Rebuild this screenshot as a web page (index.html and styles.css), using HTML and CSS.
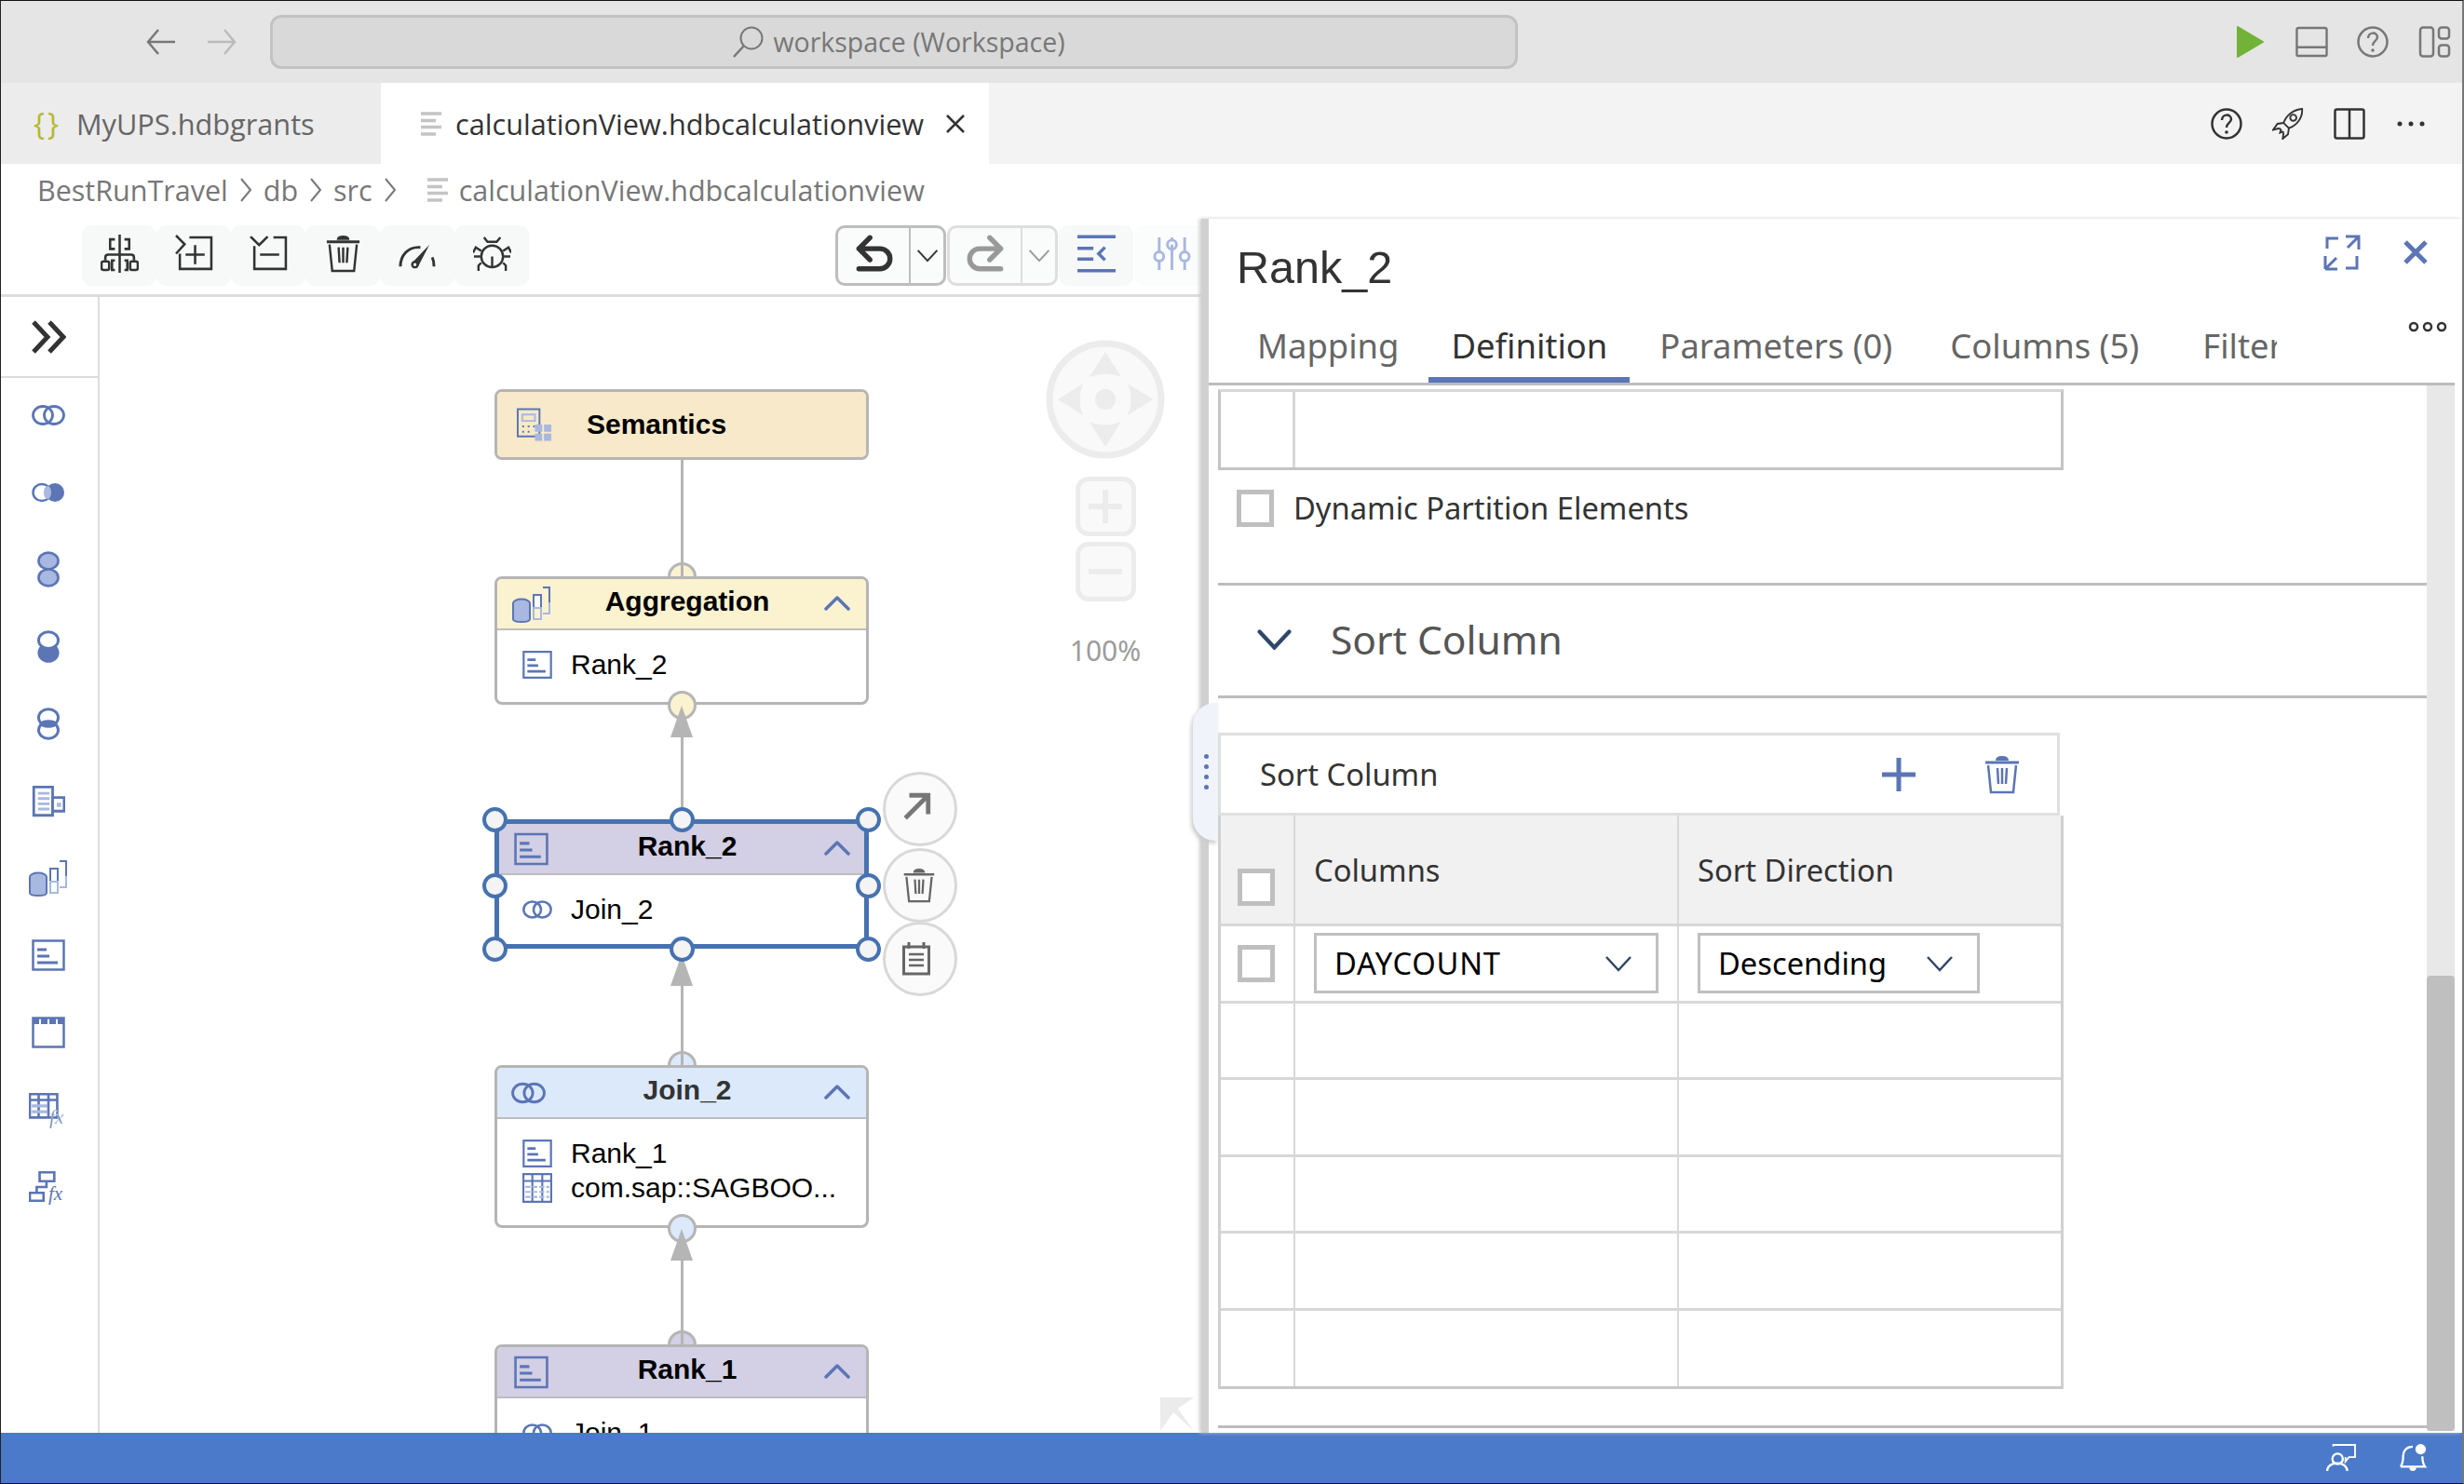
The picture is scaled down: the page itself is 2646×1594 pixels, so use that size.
FILE: index.html
```html
<!DOCTYPE html>
<html>
  <head>
    <meta charset="utf-8">
    <title>calculationView.hdbcalculationview</title>
    <link rel="stylesheet" href="styles.css">
  </head>
  <body>
    <svg class="sprite" xmlns="http://www.w3.org/2000/svg">
      <defs>
        <symbol id="i-lines" viewBox="0 0 22 28"><path d="M0 3h22M0 10.500h16M0 17.500h22M0 25h16" fill="none" stroke="currentColor" stroke-width="3.500"/></symbol>
        <symbol id="i-chev-right" viewBox="0 0 14 28"><path d="M2 2l10 12L2 26" fill="none" stroke="currentColor" stroke-width="2"/></symbol>
        <symbol id="i-chev-down" viewBox="0 0 30 18"><path d="M2 2l13 14L28 2" fill="none" stroke="currentColor" stroke-width="2.500"/></symbol>
        <symbol id="i-chev-bold" viewBox="0 0 30 18"><path d="M2 2l13 14L28 2" fill="none" stroke="currentColor" stroke-width="3.500" stroke-linecap="round"/></symbol>
        <symbol id="i-chev-up" viewBox="0 0 28 18"><path d="M2 15L14 3l12 12" fill="none" stroke="currentColor" stroke-width="3.500" stroke-linecap="round" stroke-linejoin="round"/></symbol>
        <symbol id="i-help" viewBox="0 0 34 34"><circle cx="17" cy="17" r="15.500" fill="none" stroke="currentColor" stroke-width="2.500"/><path d="M12 13c0-7 10-7 10-1 0 4-5 4-5 9" fill="none" stroke="currentColor" stroke-width="2.500"/><circle cx="17" cy="26" r="1.800" fill="currentColor"/></symbol>
        <symbol id="i-tree" viewBox="0 0 40 40"><path d="M20 0v40M15 5h-5v10h5M25 5h5v10h-5M5 27v-3q0-3 3-3h24q3 0 3 3v3M15 27h-3v10h3M25 27h3v10h-3" fill="none" stroke="currentColor" stroke-width="2.500"/><rect x="1" y="28" width="8" height="9" rx="2" fill="none" stroke="currentColor" stroke-width="2.500"/><rect x="31" y="28" width="8" height="9" rx="2" fill="none" stroke="currentColor" stroke-width="2.500"/></symbol>
        <symbol id="i-expand-add" viewBox="0 0 40 40"><path d="M1 1l9 9-9 10M15 3h23v33H5V20M11 21h20M21 11v20" fill="none" stroke="currentColor" stroke-width="2.500"/></symbol>
        <symbol id="i-collapse-sub" viewBox="0 0 40 40"><path d="M1 2l9 9 9-9M25 3h13v33H5V12M11 21h20" fill="none" stroke="currentColor" stroke-width="2.500"/></symbol>
        <symbol id="i-trash" viewBox="0 0 36 42"><path d="M0 8h36" stroke="currentColor" stroke-width="3"/><path d="M11 6q0-5 7-5t7 5z" fill="currentColor"/><path d="M3 11l3 29h24l3-29M13 14l1 17M18 14v17M23 14l-1 17" fill="none" stroke="currentColor" stroke-width="2.500"/></symbol>
        <symbol id="i-gauge" viewBox="0 0 42 36"><path d="M2 32C2 20 10 10 24 11M39 32q0-6-2-10" fill="none" stroke="currentColor" stroke-width="3"/><path d="M34 8L21 33l-6-5z" fill="currentColor"/><circle cx="18" cy="30" r="3" fill="#f7f9f9" stroke="currentColor" stroke-width="2.500"/></symbol>
        <symbol id="i-bug" viewBox="0 0 42 42"><circle cx="21" cy="24" r="12" fill="none" stroke="currentColor" stroke-width="2.500"/><path d="M21 24v12M12 3l4 5h10l4-5M9 18L3 14 0 20M33 18l6-4 3 6M9 31l-3 3v6M33 31l3 3v6M8 24H1M34 24h7" fill="none" stroke="currentColor" stroke-width="2.500"/></symbol>
        <symbol id="i-undo" viewBox="0 0 38 38"><path d="M15 3L4 14l11 11M4 14h21a10 10 0 0 1 0 20H4" fill="none" stroke="currentColor" stroke-width="5" stroke-linecap="round" stroke-linejoin="round"/></symbol>
        <symbol id="i-redo" viewBox="0 0 38 38"><path d="M23 3l11 11-11 11M34 14H13a10 10 0 0 0 0 20h21" fill="none" stroke="currentColor" stroke-width="5" stroke-linecap="round" stroke-linejoin="round"/></symbol>
        <symbol id="i-align" viewBox="0 0 36 36"><path d="M0 2h36M0 34h36M0 13h15M0 23h15M0 2" fill="none" stroke="currentColor" stroke-width="3"/><path d="M26 12l-6 6 6 6" fill="none" stroke="currentColor" stroke-width="3"/></symbol>
        <symbol id="i-sliders" viewBox="0 0 42 36"><path d="M7 0v16M7 26v10M21 8v28M21 0v2M35 0v16M35 26v10" fill="none" stroke="currentColor" stroke-width="3"/><circle cx="7" cy="21" r="5" fill="none" stroke="currentColor" stroke-width="3"/><circle cx="21" cy="8" r="5" fill="none" stroke="currentColor" stroke-width="3"/><circle cx="35" cy="21" r="5" fill="none" stroke="currentColor" stroke-width="3"/></symbol>
        <symbol id="i-join" viewBox="0 0 36 24"><ellipse cx="12" cy="12" rx="10.500" ry="9.500" fill="none" stroke="currentColor" stroke-width="2.800"/><ellipse cx="24" cy="12" rx="10.500" ry="9.500" fill="none" stroke="currentColor" stroke-width="2.800"/></symbol>
        <symbol id="i-outer" viewBox="0 0 36 24"><ellipse cx="11" cy="12" rx="9.500" ry="9" fill="none" stroke="currentColor" stroke-width="2.500"/><ellipse cx="25" cy="12" rx="10" ry="10" fill="currentColor"/><ellipse cx="17" cy="12" rx="4" ry="7" fill="#a8b8e0"/></symbol>
        <symbol id="i-union" viewBox="0 0 24 38"><ellipse cx="12" cy="10" rx="10" ry="8.500" fill="#a8b8e0" stroke="currentColor" stroke-width="2.500"/><ellipse cx="12" cy="27" rx="10" ry="8.500" fill="#a8b8e0" stroke="currentColor" stroke-width="2.500"/></symbol>
        <symbol id="i-stack-low" viewBox="0 0 24 38"><ellipse cx="12" cy="25" rx="11" ry="10" fill="currentColor"/><ellipse cx="12" cy="12" rx="10" ry="8.500" fill="#fff" stroke="currentColor" stroke-width="2.800"/></symbol>
        <symbol id="i-stack-mid" viewBox="0 0 24 38"><ellipse cx="12" cy="12" rx="10" ry="8.500" fill="none" stroke="currentColor" stroke-width="2.800"/><ellipse cx="12" cy="25" rx="10" ry="8.500" fill="none" stroke="currentColor" stroke-width="2.800"/><ellipse cx="12" cy="18.500" rx="9" ry="4" fill="currentColor"/></symbol>
        <symbol id="i-view" viewBox="0 0 32 32"><path d="M2 3h18v27H2z" fill="none" stroke="currentColor" stroke-width="2.500"/><path d="M6 9h11M6 14h11M6 19h11M6 24h11" stroke="#a8b8e0" stroke-width="2.500"/><path d="M20 13h11v13H20z" fill="#fff" stroke="currentColor" stroke-width="2.500"/><path d="M24 18h4v4h-4z" fill="#a8b8e0"/></symbol>
        <symbol id="i-aggr" viewBox="0 0 42 40"><ellipse cx="10" cy="19" rx="9" ry="4.500" fill="#a8b8e0" stroke="currentColor" stroke-width="2"/><path d="M1 19v17q0 3 9 3t9-3V19" fill="#a8b8e0" stroke="currentColor" stroke-width="2"/><path d="M23 10h8v14h-8z" fill="#fff" stroke="currentColor" stroke-width="2"/><path d="M23 24h8v12h-8z" fill="none" stroke="#a8b8e0" stroke-width="2"/><path d="M33 2h7v16" fill="none" stroke="currentColor" stroke-width="2"/><path d="M40 18v12h-7" fill="none" stroke="#a8b8e0" stroke-width="2"/></symbol>
        <symbol id="i-rank" viewBox="0 0 36 34"><path d="M1.500 1.500h33v31h-33z" fill="#fff" fill-opacity=".01" stroke="currentColor" stroke-width="2.500"/><path d="M6 11h10M6 18h13M6 25h22" stroke="currentColor" stroke-width="3"/></symbol>
        <symbol id="i-window" viewBox="0 0 36 34"><path d="M1.500 1.500h33v31h-33z" fill="none" stroke="currentColor" stroke-width="2.500"/><path d="M1 5h34" stroke="currentColor" stroke-width="6" stroke-dasharray="7 2"/></symbol>
        <symbol id="i-table" viewBox="0 0 30 30"><path d="M1 1h28v28H1zM1 8h28M10 1v28M20 1v28" fill="none" stroke="currentColor" stroke-width="2"/><path d="M3 14h24M3 19h24M3 24h24" stroke="#a8b8e0" stroke-width="2" stroke-dasharray="5 2"/></symbol>
        <symbol id="i-table-fx" viewBox="0 0 40 36"><path d="M1 2h28v24H1zM1 8h28M10 2v24M20 2v24" fill="none" stroke="currentColor" stroke-width="2.500"/><path d="M3 14h16M3 20h16" stroke="#a8b8e0" stroke-width="3"/><text x="21" y="32" font-family="Liberation Serif, serif" font-style="italic" font-size="20" fill="currentColor" stroke="#fff" stroke-width=".3">fx</text></symbol>
        <symbol id="i-graph-fx" viewBox="0 0 40 36"><path d="M11 3h15v9H11zM1 24h14v8H1zM18 12v6H8v6" fill="none" stroke="currentColor" stroke-width="2.500"/><text x="20" y="31" font-family="Liberation Serif, serif" font-style="italic" font-size="20" fill="currentColor">fx</text></symbol>
        <symbol id="i-semantics" viewBox="0 0 38 36"><path d="M1 1h24v30H1z" fill="none" stroke="currentColor" stroke-width="2"/><path d="M6 7h14v7H6z" fill="none" stroke="#a8b8e0" stroke-width="2"/><path d="M6 19h2v2H6zM12 19h2v2h-2zM18 19h2v2h-2zM6 25h2v2H6zM12 25h2v2h-2z" fill="currentColor"/><path d="M20 18h8v8h-8zM30 18h8v8h-8zM20 28h8v8h-8zM30 28h8v8h-8z" fill="#a8b8e0"/></symbol>
      </defs>
    </svg>

    <div class="window">
      <header class="titlebar">
        <div class="nav-arrows">
          <svg class="nav-arrow" viewBox="0 0 32 30"><path d="M13 2L2 15l11 13M2 15h29" fill="none" stroke="#777" stroke-width="2.500"/></svg>
          <svg class="nav-arrow nav-arrow-off" viewBox="0 0 32 30"><path d="M19 2l11 13-11 13M30 15H1" fill="none" stroke="#bbb" stroke-width="2.500"/></svg>
        </div>
        <div class="command-box">
          <svg class="command-icon" viewBox="0 0 34 34"><circle cx="21" cy="13" r="11.500" fill="none" stroke="#777" stroke-width="2"/><path d="M13 21L2 33" stroke="#777" stroke-width="2.500"/></svg>
          <span>workspace (Workspace)</span>
        </div>
        <div class="title-actions">
          <div class="title-action"><svg class="play-icon" viewBox="0 0 30 36"><path d="M2 2l27 16L2 34z" fill="#72b236" stroke="#72b236" stroke-width="2" stroke-linejoin="round"/></svg></div>
          <div class="title-action"><svg class="panel-icon" viewBox="0 0 36 34"><rect x="1.500" y="1.500" width="33" height="31" rx="2" fill="none" stroke="#777" stroke-width="2.500"/><path d="M1 23h34" stroke="#777" stroke-width="2.500"/></svg></div>
          <div class="title-action title-help"><svg class="help-icon"><use href="#i-help"/></svg></div>
          <div class="title-action"><svg class="panel-icon" viewBox="0 0 34 34"><rect x="1.500" y="1.500" width="14" height="31" rx="3" fill="none" stroke="#777" stroke-width="2.500"/><rect x="21.500" y="1.500" width="11" height="12" rx="3" fill="none" stroke="#777" stroke-width="2.500"/><rect x="21.500" y="20.500" width="11" height="12" rx="3" fill="none" stroke="#777" stroke-width="2.500"/></svg></div>
        </div>
      </header>

      <nav class="tabbar">
        <div class="tab tab-inactive">
          <span class="tab-braces">{}</span>
          <span>MyUPS.hdbgrants</span>
        </div>
        <div class="tab tab-active">
          <svg class="lines-icon"><use href="#i-lines"/></svg>
          <span>calculationView.hdbcalculationview</span>
          <svg class="tab-close" viewBox="0 0 22 22"><path d="M2 2l18 18M20 2L2 20" stroke="#333" stroke-width="2.500"/></svg>
        </div>
        <div class="tab-actions">
          <svg class="tab-action help-dark"><use href="#i-help"/></svg>
          <svg class="tab-action" viewBox="0 0 36 36"><path d="M34 1C24 2 16 8 13 17l6 6C28 20 35 11 34 1z" fill="none" stroke="#333" stroke-width="2"/><circle cx="24" cy="11" r="3.500" fill="none" stroke="#333" stroke-width="2"/><path d="M13 17l-7 1-5 7 7-2M19 23l-1 7-6 5 1-7M8 23l2 2-1 3 3-1 1 1" fill="none" stroke="#333" stroke-width="2"/></svg>
          <svg class="tab-action" viewBox="0 0 34 34"><rect x="1.500" y="1.500" width="31" height="31" rx="2" fill="none" stroke="#333" stroke-width="2.500"/><path d="M17 1v32" stroke="#333" stroke-width="2.500"/></svg>
          <svg class="tab-action" viewBox="0 0 34 34"><circle cx="5" cy="17" r="2.500" fill="#333"/><circle cx="17" cy="17" r="2.500" fill="#333"/><circle cx="29" cy="17" r="2.500" fill="#333"/></svg>
        </div>
      </nav>

      <div class="crumbs">
        <span>BestRunTravel</span>
        <svg class="crumb-sep"><use href="#i-chev-right"/></svg>
        <span>db</span>
        <svg class="crumb-sep"><use href="#i-chev-right"/></svg>
        <span>src</span>
        <svg class="crumb-sep"><use href="#i-chev-right"/></svg>
        <svg class="lines-icon crumb-file"><use href="#i-lines"/></svg>
        <span>calculationView.hdbcalculationview</span>
      </div>

      <main class="workbench">
        <section class="editor">
          <div class="toolbar">
            <div class="tool"><svg class="tool-icon"><use href="#i-tree"/></svg></div>
            <div class="tool"><svg class="tool-icon"><use href="#i-expand-add"/></svg></div>
            <div class="tool"><svg class="tool-icon"><use href="#i-collapse-sub"/></svg></div>
            <div class="tool"><svg class="tool-icon"><use href="#i-trash"/></svg></div>
            <div class="tool"><svg class="tool-icon"><use href="#i-gauge"/></svg></div>
            <div class="tool"><svg class="tool-icon"><use href="#i-bug"/></svg></div>
            <div class="toolbar-right">
              <div class="split-tool">
                <div class="split-main"><svg class="tool-icon"><use href="#i-undo"/></svg></div>
                <div class="split-menu"><svg class="split-chev"><use href="#i-chev-down"/></svg></div>
              </div>
              <div class="split-tool split-tool-off">
                <div class="split-main"><svg class="tool-icon"><use href="#i-redo"/></svg></div>
                <div class="split-menu"><svg class="split-chev"><use href="#i-chev-down"/></svg></div>
              </div>
              <div class="tool tool-blue"><svg class="tool-icon"><use href="#i-align"/></svg></div>
              <div class="tool tool-faded"><svg class="tool-icon"><use href="#i-sliders"/></svg></div>
            </div>
          </div>

          <div class="editor-body">
            <aside class="palette">
              <div class="palette-top">
                <svg class="palette-toggle" viewBox="0 0 38 38"><path d="M3 3l15 16L3 35M20 3l15 16-15 16" fill="none" stroke="#333" stroke-width="5"/></svg>
              </div>
              <div class="palette-list">
                <svg class="pal-icon"><use href="#i-join"/></svg>
                <svg class="pal-icon"><use href="#i-outer"/></svg>
                <svg class="pal-icon"><use href="#i-union"/></svg>
                <svg class="pal-icon"><use href="#i-stack-low"/></svg>
                <svg class="pal-icon"><use href="#i-stack-mid"/></svg>
                <svg class="pal-icon"><use href="#i-view"/></svg>
                <svg class="pal-icon pal-icon-wide"><use href="#i-aggr"/></svg>
                <svg class="pal-icon"><use href="#i-rank"/></svg>
                <svg class="pal-icon"><use href="#i-window"/></svg>
                <svg class="pal-icon pal-icon-wide"><use href="#i-table-fx"/></svg>
                <svg class="pal-icon pal-icon-wide"><use href="#i-graph-fx"/></svg>
              </div>
            </aside>

            <div class="canvas">
              <div class="edge edge-1"></div>
              <div class="edge edge-2"></div>
              <div class="edge edge-3"></div>
              <div class="edge edge-4"></div>

              <div class="port port-yellow port-a"></div>
              <div class="port port-blue port-c"></div>
              <div class="port port-purple port-e"></div>

              <div class="node node-semantics">
                <div class="node-head">
                  <div class="node-icon"><svg class="head-icon head-icon-sem"><use href="#i-semantics"/></svg></div>
                  <div class="node-title node-title-left">Semantics</div>
                </div>
              </div>

              <div class="node node-aggregation">
                <div class="node-head">
                  <div class="node-icon"><svg class="head-icon head-icon-aggr"><use href="#i-aggr"/></svg></div>
                  <div class="node-title">Aggregation</div>
                  <div class="node-toggle"><svg class="toggle-icon"><use href="#i-chev-up"/></svg></div>
                </div>
                <div class="node-body">
                  <div class="node-row"><svg class="row-icon"><use href="#i-rank"/></svg><span>Rank_2</span></div>
                </div>
              </div>

              <div class="node node-rank2">
                <div class="node-head">
                  <div class="node-icon"><svg class="head-icon"><use href="#i-rank"/></svg></div>
                  <div class="node-title">Rank_2</div>
                  <div class="node-toggle"><svg class="toggle-icon"><use href="#i-chev-up"/></svg></div>
                </div>
                <div class="node-body">
                  <div class="node-row"><svg class="row-icon"><use href="#i-join"/></svg><span>Join_2</span></div>
                </div>
              </div>

              <div class="node node-join2">
                <div class="node-head">
                  <div class="node-icon"><svg class="head-icon head-icon-join"><use href="#i-join"/></svg></div>
                  <div class="node-title node-title-soft">Join_2</div>
                  <div class="node-toggle"><svg class="toggle-icon"><use href="#i-chev-up"/></svg></div>
                </div>
                <div class="node-body">
                  <div class="node-row"><svg class="row-icon"><use href="#i-rank"/></svg><span>Rank_1</span></div>
                  <div class="node-row"><svg class="row-icon"><use href="#i-table"/></svg><span>com.sap::SAGBOO...</span></div>
                </div>
              </div>

              <div class="node node-rank1">
                <div class="node-head">
                  <div class="node-icon"><svg class="head-icon"><use href="#i-rank"/></svg></div>
                  <div class="node-title">Rank_1</div>
                  <div class="node-toggle"><svg class="toggle-icon"><use href="#i-chev-up"/></svg></div>
                </div>
                <div class="node-body">
                  <div class="node-row"><svg class="row-icon"><use href="#i-join"/></svg><span>Join_1</span></div>
                </div>
              </div>

              <div class="port port-yellow port-b"></div>
              <div class="port port-blue port-d"></div>
              <div class="arrow arrow-1"></div>
              <div class="arrow arrow-2"></div>
              <div class="arrow arrow-3"></div>

              <div class="grip grip-tl"></div>
              <div class="grip grip-tc"></div>
              <div class="grip grip-tr"></div>
              <div class="grip grip-ml"></div>
              <div class="grip grip-mr"></div>
              <div class="grip grip-bl"></div>
              <div class="grip grip-bc"></div>
              <div class="grip grip-br"></div>

              <div class="node-action node-action-a">
                <svg class="action-icon" viewBox="0 0 30 30"><path d="M3 27L26 4M7 4h19v19" fill="none" stroke="#777" stroke-width="4.500"/></svg>
              </div>
              <div class="node-action node-action-b">
                <svg class="action-icon"><use href="#i-trash"/></svg>
              </div>
              <div class="node-action node-action-c">
                <svg class="action-icon" viewBox="0 0 30 36"><path d="M1.500 5h27v29h-27z" fill="none" stroke="#666" stroke-width="3"/><path d="M7 0v7M23 0v7" stroke="#666" stroke-width="3"/><path d="M7 13h16M7 19h16M7 25h16" stroke="#666" stroke-width="2.500"/></svg>
              </div>

              <div class="navigator">
                <svg class="nav-wheel" viewBox="0 0 128 128">
                  <circle cx="64" cy="64" r="60" fill="#f9f9f9" stroke="#ececec" stroke-width="7"/>
                  <path d="M64 13l17 27q-17-7-34 0zM64 115l17-27q-17 7-34 0zM13 64l27-17q-7 17 0 34zM115 64L88 47q7 17 0 34z" fill="#ececec"/>
                  <circle cx="64" cy="64" r="11" fill="#ececec"/>
                </svg>
                <div class="zoom-btn"><svg class="zoom-glyph" viewBox="0 0 36 36"><path d="M0 18h36M18 0v36" stroke="#ececec" stroke-width="6"/></svg></div>
                <div class="zoom-btn"><svg class="zoom-glyph" viewBox="0 0 36 36"><path d="M0 18h36" stroke="#ececec" stroke-width="6"/></svg></div>
                <div class="zoom-label">100%</div>
              </div>

              <svg class="fit-arrow" viewBox="0 0 36 36"><path d="M0 0h36L19 12l17 24-22-20L0 36z" fill="#ebebeb"/></svg>
            </div>
          </div>
        </section>

        <section class="panel">
          <div class="panel-handle"><i></i><i></i><i></i><i></i></div>
          <div class="panel-top">
            <h1 class="panel-title">Rank_2</h1>
            <div class="panel-tools">
              <svg class="panel-tool" viewBox="0 0 40 40"><path d="M4 16V5h12M24 3h14v14M38 3L26 15M36 24v13H24M2 38V24M2 38h13M2 38l12-12" fill="none" stroke="#5b75b5" stroke-width="3"/></svg>
              <svg class="panel-tool panel-close" viewBox="0 0 26 26"><path d="M2 2l22 22M24 2L2 24" stroke="#5b75b5" stroke-width="5"/></svg>
            </div>
            <svg class="panel-more" viewBox="0 0 42 12"><circle cx="6" cy="6" r="4" fill="none" stroke="#333" stroke-width="2.500"/><circle cx="21" cy="6" r="4" fill="none" stroke="#333" stroke-width="2.500"/><circle cx="36" cy="6" r="4" fill="none" stroke="#333" stroke-width="2.500"/></svg>
            <div class="panel-tabs">
              <div class="panel-tab">Mapping</div>
              <div class="panel-tab panel-tab-on">Definition</div>
              <div class="panel-tab">Parameters (0)</div>
              <div class="panel-tab panel-tab-columns">Columns (5)</div>
              <div class="panel-tab panel-tab-filter">Filter</div>
            </div>
          </div>

          <div class="panel-body">
            <div class="panel-scroll">
              <div class="stub-table"><div class="stub-cell"></div><div></div></div>

              <label class="check-row">
                <span class="checkbox"></span>
                Dynamic Partition Elements
              </label>

              <div class="section-head">
                <svg class="section-chev"><use href="#i-chev-bold"/></svg>
                <span>Sort Column</span>
              </div>

              <div class="sort-bar">
                <span>Sort Column</span>
                <svg class="sort-add" viewBox="0 0 36 36"><path d="M0 18h36M18 0v36" stroke="#5b75b5" stroke-width="5"/></svg>
                <svg class="sort-del"><use href="#i-trash"/></svg>
              </div>

              <table class="sort-table">
                <thead>
                  <tr>
                    <th class="col-check"><span class="checkbox checkbox-low"></span></th>
                    <th>Columns</th>
                    <th>Sort Direction</th>
                  </tr>
                </thead>
                <tbody>
                  <tr>
                    <td class="col-check"><span class="checkbox"></span></td>
                    <td><div class="select select-a">DAYCOUNT<svg class="select-chev"><use href="#i-chev-down"/></svg></div></td>
                    <td><div class="select select-b">Descending<svg class="select-chev"><use href="#i-chev-down"/></svg></div></td>
                  </tr>
                  <tr><td></td><td></td><td></td></tr>
                  <tr><td></td><td></td><td></td></tr>
                  <tr><td></td><td></td><td></td></tr>
                  <tr><td></td><td></td><td></td></tr>
                  <tr class="row-last"><td></td><td></td><td></td></tr>
                </tbody>
              </table>
            </div>
            <div class="scrollbar"><div class="scrollbar-thumb"></div></div>
          </div>
        </section>
      </main>

      <footer class="statusbar">
        <svg class="status-icon" viewBox="0 0 34 32"><path d="M8 3V1h25v14h-7l-4 5v-5" fill="none" stroke="#fff" stroke-width="2"/><circle cx="13" cy="17" r="6" fill="none" stroke="#fff" stroke-width="2.500"/><path d="M1 31c0-12 23-12 23 0" fill="none" stroke="#fff" stroke-width="2.500"/></svg>
        <svg class="status-icon" viewBox="0 0 34 32"><path d="M3 26c3-4 3-8 3-13S10 3 17 3M28 14c0 5 0 8 3 12H3" fill="none" stroke="#fff" stroke-width="2.500"/><path d="M13 27a4 4 0 0 0 8 0z" fill="#fff"/><circle cx="26" cy="6" r="6" fill="#fff"/></svg>
      </footer>
    </div>
  </body>
</html>
```

FILE: styles.css
```css
:root {
  --blue-icon: #5b75b5;
  --select-blue: #4672b0;
  --edge-gray: #b5b5b5;
  --line-gray: #bdbdbd;
  --cell-gray: #d8d8d8;
  --ui-font: "Open Sans", "Noto Sans", sans-serif;
  --panel-font: "Noto Sans", "Open Sans", sans-serif;
}
*,*:before,*:after { box-sizing: border-box; }
html, body {
  margin: 0;
  height: 100%;
  overflow: hidden;
}
.sprite { display: none; }

.window {
  width: 2646px;
  height: 1594px;
  display: flex;
  flex-direction: column;
  border-top: 1px solid #111;
  border-left: 1px solid #222;
  border-bottom: 1px solid #111;
  border-right: 2px solid #777;
  background-color: #fff;
  font-family: var(--ui-font);
  overflow: hidden;
}

/* title bar */
.titlebar {
  height: 88px;
  flex: none;
  display: flex;
  align-items: center;
  background-color: #e5e5e5;
}
.nav-arrows {
  width: 289px;
  flex: none;
  display: flex;
  padding-left: 156px;
  gap: 33px;
}
.nav-arrow { width: 32px; height: 30px; }
.command-box {
  width: 1340px;
  height: 58px;
  flex: none;
  display: flex;
  align-items: center;
  justify-content: center;
  gap: 10px;
  padding-left: 10px;
  background-color: #d9d9d9;
  border: 3px solid #c2c2c2;
  border-radius: 12px;
  color: #777;
  font-size: 28.500px;
}
.command-icon { width: 34px; height: 34px; }
.title-actions {
  margin-left: auto;
  margin-right: -3px;
  display: flex;
}
.title-action {
  width: 66px;
  height: 40px;
  display: flex;
  align-items: center;
  justify-content: center;
  color: #777;
}
.play-icon { width: 30px; height: 36px; }
.panel-icon { width: 35px; height: 34px; }
.help-icon { width: 34px; height: 34px; }

/* tabs */
.tabbar {
  height: 87px;
  flex: none;
  display: flex;
  background-color: #f3f3f3;
}
.tab {
  display: flex;
  align-items: center;
  font-size: 30.700px;
}
.tab-inactive {
  width: 408px;
  padding-left: 35px;
  gap: 16px;
  background-color: #ececec;
  color: #666;
}
.tab-braces {
  color: #b5b82f;
  font-size: 32px;
  letter-spacing: 3px;
}
.tab-active {
  width: 653px;
  padding-left: 43px;
  gap: 15px;
  background-color: #fff;
  color: #333;
}
.lines-icon {
  width: 22px;
  height: 28px;
  flex: none;
  color: #c4c4c4;
}
.tab-close { width: 22px; height: 22px; margin-left: 8px; flex: none; }
.tab-actions {
  margin-left: auto;
  display: flex;
  gap: 32px;
  align-items: center;
  padding-right: 38px;
}
.tab-action { width: 34px; height: 34px; }
.help-dark { color: #333; }

/* breadcrumbs */
.crumbs {
  height: 59px;
  flex: none;
  display: flex;
  align-items: center;
  padding: 0 0 3px 39px;
  gap: 12px;
  color: #777;
  font-size: 30.500px;
}
.crumb-sep {
  width: 14px;
  height: 28px;
  flex: none;
  color: #777;
}
.crumb-file { margin-left: 21px; }

/* editor */
.workbench {
  flex: 1;
  min-height: 0;
  display: flex;
}
.editor {
  width: 1289px;
  flex: none;
  display: flex;
  flex-direction: column;
}
.toolbar {
  height: 84px;
  flex: none;
  display: flex;
  margin-right: -8px;
  padding: 7px 0 9px 87px;
  border-bottom: 3px solid #dcdce0;
}
.tool {
  width: 80px;
  height: 65px;
  display: flex;
  align-items: center;
  justify-content: center;
  background-color: #f7f9f9;
  border-radius: 10px;
  color: #333;
}
.tool-icon { width: 41px; height: 41px; margin-top: -4px; }
.tool-blue { color: var(--blue-icon); }
.tool-faded { color: #a8b8e0; background-color: #fbfcfc; }
.toolbar-right {
  margin-left: auto;
  display: flex;
  gap: 1px;
}
.split-tool {
  width: 119px;
  height: 65px;
  display: flex;
  border: 3px solid #bdbdbd;
  border-radius: 10px;
  background-color: #fafbfb;
  color: #333;
}
.split-tool-off {
  border-color: #dedede;
  color: #999;
}
.split-main {
  width: 78px;
  display: flex;
  align-items: center;
  justify-content: center;
  border-right: 2px solid #bdbdbd;
}
.split-tool-off .split-main { border-right-color: #dedede; }
.split-menu {
  flex: 1;
  display: flex;
  align-items: center;
  justify-content: center;
}
.split-chev { width: 24px; height: 15px; }
.editor-body {
  flex: 1;
  min-height: 0;
  display: flex;
}

/* palette */
.palette {
  width: 106px;
  flex: none;
  border-right: 2px solid #dcdce0;
  display: flex;
  flex-direction: column;
}
.palette-top {
  height: 87px;
  flex: none;
  display: flex;
  align-items: center;
  justify-content: center;
  border-bottom: 2px solid #dcdce0;
}
.palette-toggle { width: 38px; height: 38px; margin-left: -2px; }
.palette-list {
  display: flex;
  flex-direction: column;
  align-items: center;
  padding: 20px 2px 0 0;
  gap: 42.900px;
  color: var(--blue-icon);
}
.pal-icon { width: 36px; height: 40px; }
.pal-icon-wide { width: 42px; }

/* canvas: nodes sit on a free diagram area */
.canvas {
  position: relative;
  flex: 1;
  overflow: hidden;
  color: #000;
  font-family: "Liberation Sans", Arial, sans-serif;
  font-size: 30px;
}
.edge {
  position: absolute;
  left: 624px;
  width: 3px;
  background-color: var(--edge-gray);
  z-index: 3;
}
.edge-1 { top: 175px; height: 125px; }
.edge-2 { top: 470px; height: 92px; }
.edge-3 { top: 730px; height: 95px; }
.edge-4 { top: 1030px; height: 95px; }

.port {
  position: absolute;
  left: 610px;
  width: 31px;
  height: 31px;
  border: 3px solid var(--edge-gray);
  border-radius: 50%;
}
.port-yellow { background-color: #fbf2cf; }
.port-blue { background-color: #dbe9fb; }
.port-purple { background-color: #d3cfe4; }
.port-a { top: 285px; }
.port-b { top: 423px; z-index: 4; }
.port-c { top: 810px; }
.port-d { top: 985px; z-index: 4; }
.port-e { top: 1110px; }

.arrow {
  position: absolute;
  left: 613px;
  width: 0;
  height: 0;
  border-left: 12.500px solid transparent;
  border-right: 12.500px solid transparent;
  border-bottom: 34px solid var(--edge-gray);
  z-index: 5;
}
.arrow-1 { top: 439px; }
.arrow-2 { top: 706px; }
.arrow-3 { top: 1001px; }

.node {
  position: absolute;
  left: 424px;
  width: 402px;
  display: flex;
  flex-direction: column;
  background-color: #fff;
  border: 3px solid var(--edge-gray);
  border-radius: 8px;
  overflow: hidden;
  z-index: 2;
}
.node-semantics { top: 99px; height: 76px; }
.node-aggregation { top: 300px; height: 138px; }
.node-join2 { top: 825px; height: 175px; }
.node-rank1 { top: 1125px; height: 220px; }
.node-rank2 {
  top: 561px;
  height: 139px;
  border: 5px solid var(--select-blue);
  border-radius: 0;
}
.node-head {
  height: 55px;
  flex: none;
  display: flex;
  align-items: center;
  border-bottom: 2px solid var(--line-gray);
  color: var(--blue-icon);
}
.node-semantics .node-head {
  height: 100%;
  border-bottom: 0;
  background-color: #f7e9c9;
}
.node-aggregation .node-head { background-color: #fbf2cf; }
.node-rank2 .node-head, .node-rank1 .node-head { background-color: #d3cfe4; }
.node-join2 .node-head { background-color: #dbe9fb; }
.node-icon {
  width: 81px;
  flex: none;
  display: flex;
  padding-left: 18px;
}
.node-rank2 .node-icon { padding-left: 16px; }
.head-icon { width: 37px; height: 36px; }
.head-icon-sem { margin-left: 3px; }
.head-icon-join { margin-left: -3px; }
.head-icon-aggr { width: 42px; height: 40px; margin-left: -2px; }
.node-title {
  flex: 1;
  padding-bottom: 5px;
  text-align: center;
  font-weight: bold;
  color: #000;
}
.node-title-soft { color: #333; }
.node-title-left {
  text-align: left;
  padding: 0 0 0 15px;
}
.node-toggle {
  width: 69px;
  flex: none;
  display: flex;
  padding-left: 24px;
  padding-bottom: 2px;
}
.node-rank2 .node-toggle { padding-left: 26px; }
.toggle-icon { width: 28px; height: 18px; }
.node-body { padding: 18px 0 0 27px; }
.node-row {
  height: 37px;
  display: flex;
  align-items: center;
  gap: 20px;
}
.row-icon {
  width: 32px;
  height: 32px;
  flex: none;
  color: var(--blue-icon);
}
.node-rank2 .node-body { padding-left: 25px; padding-top: 18px; }

.grip {
  position: absolute;
  width: 27px;
  height: 27px;
  background-color: #f4f4f4;
  border: 4px solid var(--select-blue);
  border-radius: 50%;
  z-index: 6;
}
.grip-tl { left: 411px; top: 548px; }
.grip-tc { left: 612px; top: 548px; }
.grip-tr { left: 812px; top: 548px; }
.grip-ml { left: 411px; top: 619px; }
.grip-mr { left: 812px; top: 619px; }
.grip-bl { left: 411px; top: 687px; }
.grip-bc { left: 612px; top: 687px; }
.grip-br { left: 812px; top: 687px; }

.node-action {
  position: absolute;
  left: 841px;
  width: 80px;
  height: 80px;
  display: flex;
  align-items: center;
  justify-content: center;
  background-color: #fafafa;
  border: 3px solid #d8d8d8;
  border-radius: 50%;
  color: #666;
  z-index: 6;
}
.node-action-a { top: 510px; }
.node-action-b { top: 592px; }
.node-action-c { top: 671px; }
.action-icon { width: 34px; height: 38px; margin-left: -2px; }
.node-action-a .action-icon { width: 32px; height: 32px; margin: -6px 0 0 -6px; }
.node-action-c .action-icon { width: 30px; height: 36px; margin-left: -8px; }

.navigator {
  position: absolute;
  left: 1016px;
  top: 46px;
  width: 128px;
  display: flex;
  flex-direction: column;
  align-items: center;
}
.nav-wheel { width: 128px; height: 128px; }
.zoom-btn {
  width: 65px;
  height: 64px;
  margin-bottom: 6px;
  display: flex;
  align-items: center;
  justify-content: center;
  background-color: #f9f9f9;
  border: 5px solid #ececec;
  border-radius: 14px;
}
.nav-wheel + .zoom-btn { margin-top: 19px; }
.zoom-glyph { width: 36px; height: 36px; }
.zoom-label {
  margin-top: 26px;
  color: #9c9c9c;
  font-family: var(--panel-font);
  font-size: 30px;
}
.fit-arrow {
  position: absolute;
  right: 8px;
  bottom: 2px;
  width: 36px;
  height: 36px;
}

/* side panel */
.panel {
  position: relative;
  flex: 1;
  min-width: 0;
  display: flex;
  flex-direction: column;
  border-left: 8px solid #d0d0d0;
  box-shadow: -2px 0 4px #ccc;
  background-color: #fff;
  font-family: var(--panel-font);
}
.panel-handle {
  position: absolute;
  left: -17px;
  top: 520px;
  width: 27px;
  height: 148px;
  display: flex;
  flex-direction: column;
  justify-content: center;
  padding-left: 12px;
  gap: 6px;
  background-color: #f0f3fa;
  border-radius: 24px 0 0 24px;
  box-shadow: -2px 3px 4px #ccc;
  z-index: 8;
}
.panel-handle i {
  width: 5px;
  height: 5px;
  background-color: var(--blue-icon);
  border-radius: 50%;
}
.panel-top {
  position: relative;
  height: 179px;
  flex: none;
  margin-right: 8px;
  border-bottom: 3px solid var(--line-gray);
}
.panel-title {
  margin: 0;
  padding: 22px 0 0 30px;
  font-size: 48.500px;
  font-weight: normal;
  line-height: 60px;
  color: #333;
  font-family: "Liberation Sans", sans-serif;
}
.panel-tools {
  position: absolute;
  top: 16px;
  right: 29px;
  display: flex;
  align-items: center;
  gap: 46px;
}
.panel-tool { width: 40px; height: 40px; }
.panel-close { width: 26px; height: 26px; }
.panel-more {
  position: absolute;
  right: 8px;
  top: 110px;
  width: 42px;
  height: 12px;
}
.panel-tabs {
  position: absolute;
  left: 28px;
  bottom: 0;
  width: 1119px;
  height: 90px;
  display: flex;
  gap: 8px;
  overflow: hidden;
}
.panel-tab {
  flex: none;
  padding: 25px 24px 0;
  font-size: 36.400px;
  line-height: 50px;
  color: #666;
  white-space: nowrap;
  border-bottom: 6px solid transparent;
}
.panel-tab-columns { margin-left: 6px; }
.panel-tab-filter { margin-left: 12px; }
.panel-tab-on {
  color: #333;
  border-bottom-color: var(--blue-icon);
}
.panel-body {
  flex: 1;
  min-height: 0;
  display: flex;
  padding-left: 10px;
}
.panel-scroll {
  flex: 1;
  min-width: 0;
  margin-bottom: 5px;
  padding-top: 4px;
  border-bottom: 3px solid var(--line-gray);
  overflow: hidden;
  color: #333;
  font-size: 32.700px;
}
.scrollbar {
  width: 30px;
  flex: none;
  margin-right: 8px;
  margin-bottom: 2px;
  display: flex;
  flex-direction: column;
  justify-content: flex-end;
  background-color: #e8e8e8;
}
.scrollbar-thumb {
  height: 489px;
  background-color: #bfbfbf;
  border-radius: 4px;
}
.stub-table {
  width: 908px;
  height: 87px;
  display: flex;
  border: 3px solid var(--cell-gray);
  border-bottom-color: #c4c4c4;
  border-left-color: #c4c4c4;
  border-right-color: #c4c4c4;
}
.stub-cell {
  width: 80px;
  border-right: 3px solid var(--cell-gray);
}
.check-row {
  height: 121px;
  display: flex;
  align-items: flex-start;
  gap: 21px;
  padding: 21px 0 0 20px;
  line-height: 40px;
  color: #333;
}
.checkbox {
  display: block;
  width: 40px;
  height: 40px;
  flex: none;
  background-color: #fff;
  border: 5px solid #bfbfbf;
}
.section-head {
  height: 124px;
  display: flex;
  align-items: center;
  gap: 42px;
  padding: 0 0 3px 42px;
  border-top: 3px solid var(--line-gray);
  border-bottom: 3px solid var(--line-gray);
  font-size: 42.500px;
  color: #555;
}
.section-chev {
  width: 37px;
  height: 22px;
  color: #2f4668;
}
.sort-bar {
  width: 904px;
  height: 89px;
  margin-top: 37px;
  display: flex;
  align-items: center;
  padding-left: 42px;
  border: 3px solid #e0e0e0;
}
.sort-add {
  width: 36px;
  height: 36px;
  margin-left: auto;
}
.sort-del {
  width: 36px;
  height: 42px;
  margin: 0 41px 0 75px;
  color: var(--blue-icon);
}
.sort-table {
  width: 908px;
  table-layout: fixed;
  border-collapse: separate;
  border-spacing: 0;
  border-left: 3px solid #d0d0d0;
  border-right: 3px solid #d0d0d0;
  border-bottom: 3px solid #c8c8c8;
}
.sort-table th, .sort-table td {
  height: 82.500px;
  padding: 0 0 0 20px;
  border-bottom: 3px solid var(--cell-gray);
  border-right: 2px solid var(--cell-gray);
  font-weight: normal;
  text-align: left;
}
.sort-table th:last-child, .sort-table td:last-child { border-right: 0; }
.sort-table th {
  height: 119px;
  background-color: #f1f1f1;
  color: #333;
}
.sort-table .row-last td { height: 81px; border-bottom: 0; }
.sort-table .col-check { width: 80px; padding-left: 18px; }
.sort-table th:nth-child(2) { width: 412px; }
.checkbox-low { margin-top: 38px; }
.select {
  height: 65px;
  display: flex;
  align-items: center;
  padding-left: 19px;
  background-color: #fff;
  border: 3px solid #c0c0c0;
  color: #000;
}
.select-a { width: 370px; letter-spacing: .8px; }
.select-b { width: 303px; }
.select-chev {
  width: 30px;
  height: 18px;
  margin-left: auto;
  margin-right: 25px;
  color: #2f4668;
}

/* status bar */
.statusbar {
  height: 54px;
  flex: none;
  display: flex;
  align-items: center;
  justify-content: flex-end;
  gap: 45px;
  padding-right: 37px;
  background-color: #4a7ac9;
}
.status-icon { width: 32px; height: 30px; }
```
